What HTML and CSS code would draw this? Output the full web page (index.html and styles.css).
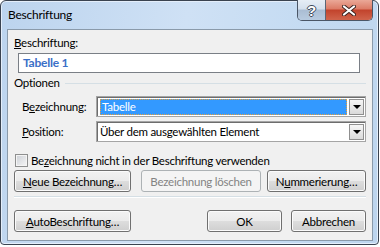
FILE: index.html
```html
<!DOCTYPE html>
<html lang="de">
<head>
  <meta charset="UTF-8" />
  <title>Beschriftung</title>
  <link rel="stylesheet" href="styles.css">
</head>
<body>
  <div class="window">
    <div class="titlebar">
      <span class="title">Beschriftung</span>
      <div class="caption-btns">
        <div class="cbtn help">?</div>
        <div class="cbtn close">
          <svg width="14" height="11" viewBox="0 0 14 11">
            <path d="M2 1.5 L12 9.5 M12 1.5 L2 9.5" stroke="#3b2320" stroke-width="4" stroke-linecap="round"/>
            <path d="M2 1.5 L12 9.5 M12 1.5 L2 9.5" stroke="#fff" stroke-width="2.2" stroke-linecap="round"/>
          </svg>
        </div>
      </div>
    </div>

    <div class="client">
      <div class="lbl"><u>B</u>eschriftung:</div>
      <div class="textbox">Tabelle 1</div>

      <div class="group-head"><span>Optionen</span><div class="rule"></div></div>

      <div class="field">
        <span class="flabel">B<u>e</u>zeichnung:</span>
        <div class="combo">
          <div class="combo-val"><span class="sel">Tabelle</span></div>
          <div class="combo-btn"><span class="arrow"></span></div>
        </div>
      </div>
      <div class="field second">
        <span class="flabel"><u>P</u>osition:</span>
        <div class="combo">
          <div class="combo-val">Über dem ausgewählten Element</div>
          <div class="combo-btn"><span class="arrow"></span></div>
        </div>
      </div>

      <div class="check-row">
        <span class="checkbox"></span>
        <span>Be<u>z</u>eichnung nicht in der Beschriftung verwenden</span>
      </div>

      <div class="btn-row">
        <div class="btn w-neue"><u>N</u>eue Bezeichnung…</div>
        <div class="btn w-loeschen disabled">Bezeichnung löschen</div>
        <div class="btn w-num">N<u>u</u>mmerierung…</div>
      </div>

      <div class="sep"></div>

      <div class="btn-row bottom">
        <div class="btn w-neue"><u>A</u>utoBeschriftung…</div>
        <div class="spacer"></div>
        <div class="btn w-ok">OK</div>
        <div class="btn w-ok cancel">Abbrechen</div>
      </div>
    </div>
  </div>
</body>
</html>
```

FILE: styles.css
```css
body {
  margin: 0;
  background: #fff;
  font-family: Lato, 'Liberation Sans', sans-serif;
  font-size: 11.5px;
  letter-spacing: -0.25px;
  color: #000;
}
u { text-decoration: underline; text-underline-offset: 1px; }

.window {
  width: 379px;
  height: 245px;
  box-sizing: border-box;
  border: 1px solid #3a4350;
  border-radius: 6px 6px 4px 4px;
  padding: 0 5px 3px 6px;
  background: linear-gradient(100deg, #bcd4ee 0%, #cfe1f5 45%, #c4dbf2 75%, #bdd5ee 100%);
  box-shadow: inset 0 0 0 1px #e4eefa;
}
.titlebar {
  height: 28px;
  display: flex;
  align-items: flex-start;
}
.title {
  margin-left: 1px;
  margin-top: 7px;
  font-size: 12px;
  line-height: 14px;
}
.caption-btns {
  margin-left: auto;
  margin-top: -1px;
  display: flex;
  height: 20px;
  border: 1px solid #4a5666;
  border-top: none;
  border-radius: 0 0 5px 5px;
  overflow: hidden;
}
.cbtn {
  height: 20px;
  display: flex;
  align-items: center;
  justify-content: center;
}
.help {
  width: 27px;
  border-right: 1px solid #5a6676;
  background: linear-gradient(#e6edf5 0%, #d4e0ed 45%, #aabdd3 50%, #b8cbe0 100%);
  color: #fff;
  font-family: 'Liberation Sans', sans-serif;
  font-weight: bold;
  font-size: 15px;
  text-shadow: 1px 0 0 #3f4b5a, -1px 0 0 #3f4b5a, 0 1px 0 #3f4b5a, 0 -1px 0 #3f4b5a;
}
.close {
  width: 46px;
  background: linear-gradient(#eaa897 0%, #dc7b66 45%, #c2432c 50%, #d0644c 100%);
}

.client {
  height: 212px;
  box-sizing: border-box;
  border: 1px solid #8a9aaa;
  background: #f0f0f0;
  padding: 0 6px;
  display: flex;
  flex-direction: column;
}
.lbl { margin-top: 6px; line-height: 14px; }
.textbox {
  margin: 3px 0 0 4px;
  width: 342px;
  height: 20px;
  box-sizing: border-box;
  border: 1px solid #7a7f86;
  background: #fff;
  padding-left: 4px;
  line-height: 18px;
  color: #3b6fc7;
  font-weight: bold;
  font-size: 12px;
}
.group-head {
  margin-top: 3px;
  display: flex;
  align-items: center;
  line-height: 14px;
}
.group-head .rule {
  flex: 1;
  height: 1px;
  background: #d5dfe5;
  margin: 0 0 0 5px;
}
.field {
  margin-top: 6px;
  display: flex;
  align-items: center;
}
.field.second { margin-top: 4px; }
.flabel { width: 74px; padding-left: 8px; }
.combo {
  width: 270px;
  height: 21px;
  box-sizing: border-box;
  border: 1px solid #a5a5a5;
  box-shadow: inset 1px 1px 0 #6d6d6d;
  background: #fff;
  display: flex;
  padding: 2px 1px 1px 2px;
}
.combo-val {
  flex: 1;
  line-height: 16px;
  padding-left: 1px;
}
.combo-val .sel {
  display: block;
  height: 16px;
  box-sizing: border-box;
  background: #3399ff;
  color: #fff;
  border: 1px dotted #e8a03a;
  line-height: 14px;
  padding-left: 1px;
  margin-right: 2px;
}
.combo-btn {
  width: 15px;
  box-sizing: border-box;
  border: 1px solid #8f8f8f;
  background: linear-gradient(#f6f6f6, #dadada);
  display: flex;
  align-items: center;
  justify-content: center;
}
.arrow {
  width: 0;
  height: 0;
  border-left: 4px solid transparent;
  border-right: 4px solid transparent;
  border-top: 4px solid #000;
}
.check-row {
  margin-top: 12px;
  display: flex;
  align-items: center;
  height: 13px;
}
.checkbox {
  width: 13px;
  height: 13px;
  box-sizing: border-box;
  margin-left: 1px;
  margin-right: 3px;
  border: 1px solid #8e8f8f;
  background: linear-gradient(135deg, #cbcfd5, #f6f6f6);
  box-shadow: inset 0 0 0 1px #f4f4f4;
}
.btn-row {
  margin-top: 3px;
  display: flex;
}
.btn-row.bottom { margin-top: 12px; }
.btn {
  height: 22px;
  box-sizing: border-box;
  border: 1px solid #707070;
  border-radius: 3px;
  background: linear-gradient(#f2f2f2 0%, #ebebeb 50%, #dddddd 51%, #cfcfcf 100%);
  box-shadow: inset 0 0 0 1px #fbfbfb;
  display: flex;
  align-items: center;
  justify-content: center;
}
.btn.disabled {
  border-color: #adb2b5;
  background: #f4f4f4;
  color: #838383;
  box-shadow: none;
}
.w-neue { width: 117px; }
.w-loeschen { width: 120px; margin-left: 10px; }
.w-num { width: 99px; margin-left: 6px; }
.w-ok { width: 75px; }
.cancel { margin-left: 9px; }
.spacer { flex: 1; }
.sep {
  margin-top: 4px;
  height: 1px;
  background: #d5dfe5;
  border-bottom: 1px solid #fff;
}
```
